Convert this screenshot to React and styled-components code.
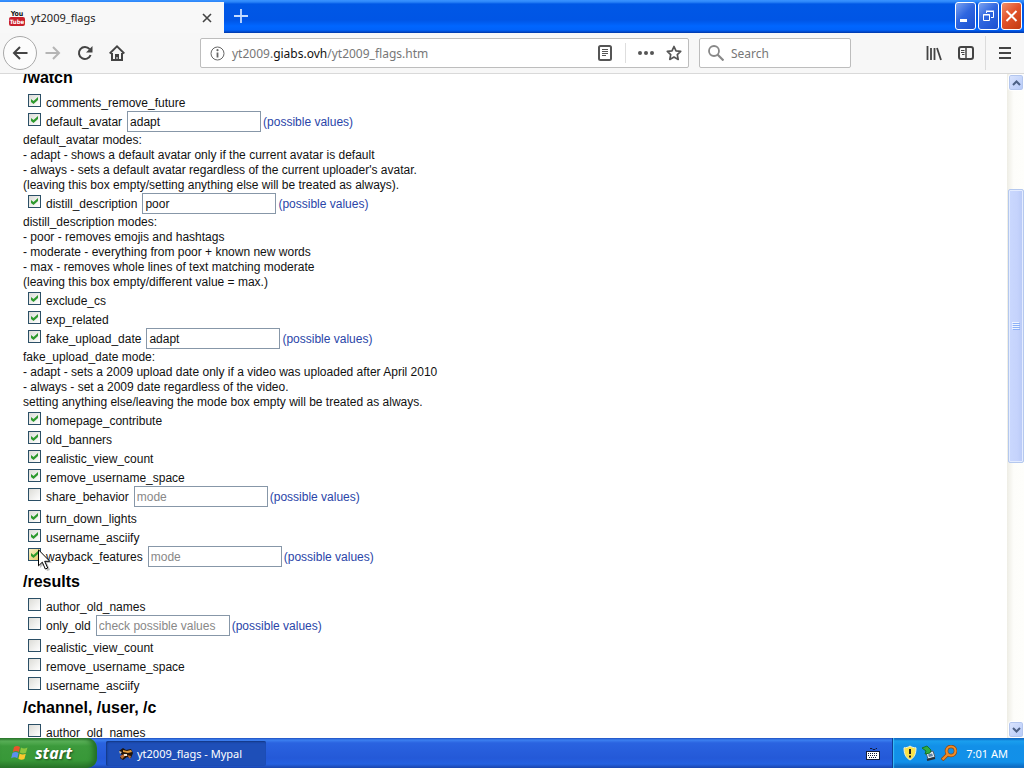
import React from "react";
import styled, { createGlobalStyle } from "styled-components";

const watchFlags = [
  { name: "comments_remove_future", on: true },
  {
    name: "default_avatar",
    on: true,
    value: "adapt",
    notes: [
      "default_avatar modes:",
      "- adapt - shows a default avatar only if the current avatar is default",
      "- always - sets a default avatar regardless of the current uploader's avatar.",
      "(leaving this box empty/setting anything else will be treated as always)."
    ]
  },
  {
    name: "distill_description",
    on: true,
    value: "poor",
    notes: [
      "distill_description modes:",
      "- poor - removes emojis and hashtags",
      "- moderate - everything from poor + known new words",
      "- max - removes whole lines of text matching moderate",
      "(leaving this box empty/different value = max.)"
    ]
  },
  { name: "exclude_cs", on: true },
  { name: "exp_related", on: true },
  {
    name: "fake_upload_date",
    on: true,
    value: "adapt",
    notes: [
      "fake_upload_date mode:",
      "- adapt - sets a 2009 upload date only if a video was uploaded after April 2010",
      "- always - set a 2009 date regardless of the video.",
      "setting anything else/leaving the mode box empty will be treated as always."
    ]
  },
  { name: "homepage_contribute", on: true },
  { name: "old_banners", on: true },
  { name: "realistic_view_count", on: true },
  { name: "remove_username_space", on: true },
  { name: "share_behavior", placeholder: "mode" },
  { name: "turn_down_lights", on: true },
  { name: "username_asciify", on: true },
  { name: "wayback_features", on: true, placeholder: "mode", hovered: true }
];

const resultsFlags = [
  { name: "author_old_names" },
  { name: "only_old", placeholder: "check possible values" },
  { name: "realistic_view_count" },
  { name: "remove_username_space" },
  { name: "username_asciify" }
];

const channelFlags = [{ name: "author_old_names" }];

const Flag = ({ page, flag }) => {
  const id = page + "-" + flag.name;
  const hasBox = flag.value !== undefined || flag.placeholder !== undefined;
  return (
    <>
      <FlagRow $tall={hasBox}>
        <CheckBox
          type="checkbox"
          id={id}
          defaultChecked={flag.on}
          $hovered={flag.hovered}
        />
        <FlagName htmlFor={id}>{flag.name}</FlagName>
        {hasBox && (
          <>
            <ModeBox
              type="text"
              aria-label={flag.name + " mode"}
              defaultValue={flag.value}
              placeholder={flag.placeholder}
            />
            <Values href="#">(possible values)</Values>
          </>
        )}
        {flag.hovered && <MousePointer />}
      </FlagRow>
      {flag.notes && flag.notes.map((n) => <Note key={n}>{n}</Note>)}
    </>
  );
};

const Section = ({ title, flags }) => (
  <section>
    <Heading>{title}</Heading>
    {flags.map((f) => (
      <Flag key={f.name} page={title} flag={f} />
    ))}
  </section>
);

const MousePointer = () => (
  <Pointer width="14" height="23" viewBox="0 0 14 23" aria-hidden="true">
    <path
      d="M2 3v16l4-4 3 7 3-1-3-7h5z"
      fill="#000"
      opacity="0.25"
    />
    <path
      d="M.5.8v16l3.8-3.6 3 6.8 2.4-1-3-6.7h5.1z"
      fill="#fff"
      stroke="#000"
    />
  </Pointer>
);

const YouTubeIcon = () => (
  <svg width="16" height="16" viewBox="0 0 16 16" aria-hidden="true">
    <rect x="0" y="7" width="16" height="9" rx="2" fill="#c9202b" />
    <text x="8" y="6" fontSize="7" fontWeight="bold" textAnchor="middle" fill="#111">
      You
    </text>
    <text x="8" y="14" fontSize="6" fontWeight="bold" textAnchor="middle" fill="#fff">
      Tube
    </text>
  </svg>
);

const App = () => {
  return (
    <Screen>
      <GlobalStyle />
      <TitleBar>
        <Tab>
          <YouTubeIcon />
          <TabTitle>yt2009_flags</TabTitle>
          <PlainButton aria-label="Close tab">
            <svg width="10" height="10" viewBox="0 0 10 10">
              <path d="M1 1l8 8M9 1l-8 8" stroke="#444" strokeWidth="1.6" />
            </svg>
          </PlainButton>
        </Tab>
        <NewTab aria-label="New tab">
          <svg width="14" height="14" viewBox="0 0 14 14">
            <path d="M7 0v14M0 7h14" stroke="#c5dcff" strokeWidth="1.8" />
          </svg>
        </NewTab>
        <WindowButtons>
          <WindowButton aria-label="Minimize">
            <svg width="19" height="26" viewBox="0 0 19 26">
              <path d="M4 16h7v3H4z" fill="#fff" />
            </svg>
          </WindowButton>
          <WindowButton aria-label="Restore">
            <svg width="19" height="26" viewBox="0 0 19 26" fill="none">
              <path d="M7.5 10V8.500h7v6H12M7 8h8" stroke="#fff" />
              <path d="M4.500 11.500h6v6h-6zM4 12h7" stroke="#fff" />
            </svg>
          </WindowButton>
          <WindowButton aria-label="Close" $close>
            <svg width="19" height="26" viewBox="0 0 19 26">
              <path d="M4.500 8l10 10M14.500 8l-10 10" stroke="#fff" strokeWidth="2" />
            </svg>
          </WindowButton>
        </WindowButtons>
      </TitleBar>

      <Toolbar>
        <BackButton aria-label="Back">
          <svg width="16" height="16" viewBox="0 0 16 16" fill="none">
            <path d="M15.500 8H2M8 2L2 8l6 6" stroke="#444" strokeWidth="2" />
          </svg>
        </BackButton>
        <ToolButton aria-label="Forward">
          <svg width="16" height="16" viewBox="0 0 16 16" fill="none">
            <path d="M.5 8H14M8 2l6 6-6 6" stroke="#b5b5b5" strokeWidth="2" />
          </svg>
        </ToolButton>
        <ToolButton aria-label="Reload">
          <svg width="16" height="16" viewBox="0 0 16 16" fill="none">
            <path
              d="M12.600 4.200A6 6 0 1 0 13.600 10"
              stroke="#444"
              strokeWidth="2"
            />
            <path d="M15.500 1v6.500H9z" fill="#444" />
          </svg>
        </ToolButton>
        <ToolButton aria-label="Home">
          <svg width="16" height="16" viewBox="0 0 16 16" fill="none">
            <path d="M.7 8.500L8 1.300l7.300 7.200" stroke="#444" strokeWidth="1.800" />
            <path d="M3 8v7h10V8" stroke="#444" strokeWidth="2" />
            <path d="M6 9h4v6H8.500v-3h-1v3H6z" fill="#444" />
          </svg>
        </ToolButton>
        <UrlBar>
          <svg width="15" height="15" viewBox="0 0 15 15" fill="none">
            <circle cx="7.500" cy="7.500" r="6.500" stroke="#666" />
            <path d="M7.500 6.500v5" stroke="#666" strokeWidth="1.800" />
            <circle cx="7.500" cy="4.200" r="1.100" fill="#666" />
          </svg>
          <Address>
            yt2009.<b>giabs.ovh</b>/yt2009_flags.htm
          </Address>
          <PlainButton aria-label="Reader view">
            <svg width="16" height="16" viewBox="0 0 16 16" fill="none">
              <rect x="2" y="1" width="12" height="14" rx="1.500" stroke="#555" strokeWidth="2" />
              <path d="M5 4.500h6M5 6.500h6M5 8.500h6M5 10.500h4" stroke="#555" />
            </svg>
          </PlainButton>
          <UrlDivider />
          <PlainButton aria-label="Page actions">
            <svg width="16" height="16" viewBox="0 0 16 16" fill="#555">
              <circle cx="2" cy="8" r="2" />
              <circle cx="8" cy="8" r="2" />
              <circle cx="14" cy="8" r="2" />
            </svg>
          </PlainButton>
          <Star aria-label="Bookmark this page">
            <svg width="16" height="16" viewBox="0 0 16 16" fill="none">
              <path
                d="M8 1.500l2 4.300 4.700.6-3.400 3.200.9 4.800L8 12l-4.200 2.400.9-4.800L1.300 6.400 6 5.800z"
                stroke="#555"
                strokeWidth="1.700"
                strokeLinejoin="round"
              />
            </svg>
          </Star>
        </UrlBar>
        <SearchBar>
          <svg width="16" height="16" viewBox="0 0 16 16" fill="none">
            <circle cx="6" cy="6" r="5" stroke="#888" strokeWidth="1.800" />
            <path d="M9.500 9.500l6 6" stroke="#888" strokeWidth="2.200" />
          </svg>
          <SearchInput type="text" aria-label="Search" placeholder="Search" />
        </SearchBar>
        <ToolButton aria-label="Library">
          <svg width="16" height="16" viewBox="0 0 16 16">
            <path
              d="M1.500 1v14M5 3v12M8.500 3v12M11 3l4 12"
              stroke="#444"
              strokeWidth="1.800"
            />
          </svg>
        </ToolButton>
        <ToolButton aria-label="Sidebars">
          <svg width="16" height="16" viewBox="0 0 16 16" fill="none">
            <rect x="1" y="2" width="14" height="12" rx="2" stroke="#444" strokeWidth="2" />
            <path d="M8 2v12" stroke="#444" strokeWidth="1.500" />
            <path d="M3 5.500h3.500M3 7.500h3.500M4 9.500h2.500" stroke="#444" />
          </svg>
        </ToolButton>
        <ToolDivider />
        <ToolButton aria-label="Open menu">
          <svg width="12" height="12" viewBox="0 0 12 12">
            <path d="M0 1h12M0 6h12M0 11h12" stroke="#444" strokeWidth="2" />
          </svg>
        </ToolButton>
      </Toolbar>

      <Viewport>
        <Page>
          <Section title="/watch" flags={watchFlags} />
          <Section title="/results" flags={resultsFlags} />
          <Section title="/channel, /user, /c" flags={channelFlags} />
        </Page>
        <ScrollBar>
          <ScrollButton aria-label="Scroll up" tabIndex={-1}>
            <svg width="9" height="6" viewBox="0 0 9 6" fill="none">
              <path d="M1 5l3.500-3.500L8 5" stroke="#4d6185" strokeWidth="2" />
            </svg>
          </ScrollButton>
          <Gap $grow={98} />
          <Thumb>
            <svg width="8" height="8" viewBox="0 0 8 8">
              <path d="M0 .5h7M0 2.500h7M0 4.500h7M0 6.500h7" stroke="#eef4fe" />
              <path d="M1 1.500h7M1 3.500h7M1 5.500h7M1 7.500h7" stroke="#8cb0f8" />
            </svg>
          </Thumb>
          <Gap $grow={259} />
          <ScrollButton aria-label="Scroll down" tabIndex={-1}>
            <svg width="9" height="6" viewBox="0 0 9 6" fill="none">
              <path d="M1 1l3.500 3.500L8 1" stroke="#4d6185" strokeWidth="2" />
            </svg>
          </ScrollButton>
        </ScrollBar>
      </Viewport>

      <TaskBar>
        <StartButton>
          <svg width="18" height="18" viewBox="0 0 18 18">
            <path d="M3 3c2-1.500 4-1.500 6 0L7.800 8C6 6.800 4 6.800 1.800 8z" fill="#e8542c" />
            <path d="M10 3.500c2 1.200 4 1.200 6.500 0L15 8.800c-2 1-4 1-6.200-.3z" fill="#8cc63e" />
            <path d="M1.500 9c2-1.300 4-1.300 6 0l-1.200 5.200C4.500 13 2.500 13 .2 14.200z" fill="#5b8ff0" />
            <path d="M8.600 9.600c2 1.200 4 1.200 6.200.2l-1.400 5.200c-2 1-4 1-6-.3z" fill="#fbc82e" />
          </svg>
          start
        </StartButton>
        <TaskButton>
          <svg width="16" height="16" viewBox="0 0 16 16">
            <path d="M1 5l4-3 3 2 5-1 2 4-2 5-4-1-4 3-3-2 2-3z" fill="#20150c" />
            <path d="M5 4l4 1 4-1 1 2-4 1-5-1z" fill="#e09a3c" />
            <path d="M1 5l3 1-2 2z" fill="#cfc3b4" />
            <path d="M2 10l4-2 1 2-3 3zM9 9l4 1-1 3z" fill="#b96a35" />
            <path d="M6 8h3v2H6z" fill="#f2e7d6" />
          </svg>
          yt2009_flags - Mypal
        </TaskButton>
        <LanguageButton aria-label="Keyboard">
          <svg width="14" height="14" viewBox="0 0 14 14" fill="none">
            <path d="M4 2.500h2l1 1h2l1-1h1" stroke="#111c3c" />
            <rect x=".5" y="5.500" width="13" height="8" fill="#fff" stroke="#111c3c" />
            <path
              d="M2 7.500h10M2 9.500h10M3 11.500h8"
              stroke="#111c3c"
              strokeDasharray="1 1"
            />
          </svg>
        </LanguageButton>
        <Tray>
          <svg width="14" height="16" viewBox="0 0 14 16">
            <path
              d="M7 1c2 1.400 4 1.800 6 1.800 0 6-1.500 9.700-6 12.200C2.500 12.500 1 8.800 1 2.800 3 2.800 5 2.400 7 1z"
              fill="#fbe34a"
              stroke="#eef0da"
            />
            <path d="M7 4v5M7 10.500v2" stroke="#222" strokeWidth="2" />
          </svg>
          <svg width="16" height="16" viewBox="0 0 16 16">
            <path d="M5 8l7-2 2 6-7 2z" fill="#dfe7ee" stroke="#4d5f70" />
            <path d="M7 9.500l4-1 1 2.500-4 1z" fill="#5d82a5" />
            <path d="M1 3l5-2 4 4-1 3-5 1 1-3z" fill="#2fae42" stroke="#16752a" />
            <path d="M6 15l8-2" stroke="#26313b" strokeWidth="2" />
          </svg>
          <svg width="16" height="16" viewBox="0 0 16 16" fill="none">
            <circle cx="10" cy="6" r="4.500" stroke="#8c4a12" strokeWidth="3.500" />
            <path d="M7 9l-6 6" stroke="#8c4a12" strokeWidth="3.800" />
            <circle cx="10" cy="6" r="4.500" stroke="#f08b28" strokeWidth="2.200" />
            <path d="M7 9l-5.500 5.500" stroke="#f08b28" strokeWidth="2.400" />
          </svg>
          <Clock>7:01 AM</Clock>
        </Tray>
      </TaskBar>
    </Screen>
  );
};

export default App;

const GlobalStyle = createGlobalStyle`
  body {
    margin: 0;
    background: #fff;
  }
  *, *::before, *::after {
    box-sizing: border-box;
  }
  button, input {
    font-family: inherit;
    padding: 0;
    margin: 0;
    border: 0;
    background: none;
  }
  svg {
    display: block;
    flex: none;
  }
`;

const Screen = styled.div`
  display: flex;
  flex-direction: column;
  height: 100vh;
  overflow: hidden;
  font-family: "Noto Sans", sans-serif;
  font-size: 12px;
`;

const TitleBar = styled.header`
  flex: none;
  display: flex;
  height: 33px;
  padding-top: 2px;
  background: linear-gradient(
    #3a93ff 0,
    #2a84f8 2px,
    #0058e6 4px,
    #0055e5 20px,
    #0066ff 26px,
    #0062fa 30px,
    #0036a8 33px
  );
`;

const Tab = styled.div`
  display: flex;
  align-items: center;
  width: 224px;
  padding: 0 12px 0 9px;
  background: #f8f8f8;

  text {
    font-family: "DejaVu Sans Condensed", "Liberation Sans", sans-serif;
  }
`;

const TabTitle = styled.span`
  flex: 1;
  padding-left: 6px;
  font-size: 11px;
  color: #222;
`;

const PlainButton = styled.button`
  display: flex;
  align-items: center;
`;

const NewTab = styled(PlainButton)`
  padding: 0 10px 4px;
`;

const WindowButtons = styled.div`
  display: flex;
  align-items: flex-start;
  gap: 2px;
  margin-left: auto;
  padding-right: 2px;
`;

const WindowButton = styled.button`
  width: 21px;
  height: 28px;
  border: 1px solid #fff;
  border-radius: 3px;
  background: ${(p) =>
    p.$close
      ? "linear-gradient(135deg, #f0906c, #e2532b 45%, #c23a10)"
      : "linear-gradient(135deg, #7ba2f0, #2f66e0 45%, #1a4fd0)"};
`;

const Toolbar = styled.nav`
  flex: none;
  display: flex;
  align-items: center;
  height: 41px;
  padding: 0 3px;
  background: #f7f7f7;
  border-bottom: 1px solid #d9d9d9;
`;

const ToolButton = styled.button`
  flex: none;
  display: flex;
  align-items: center;
  justify-content: center;
  width: 32px;
  height: 32px;
`;

const BackButton = styled(ToolButton)`
  width: 34px;
  height: 34px;
  border: 1px solid #a9a9a9;
  border-radius: 50%;
  background: #fcfcfc;
`;

const UrlBar = styled.div`
  flex: 1;
  display: flex;
  align-items: center;
  height: 30px;
  margin-left: 67px;
  padding: 0 6px 0 9px;
  background: #fff;
  border: 1px solid #bdbdbd;
  border-radius: 2px;
`;

const Address = styled.span`
  flex: 1;
  padding-left: 7px;
  color: #777;
  white-space: nowrap;

  b {
    font-weight: normal;
    color: #111;
  }
`;

const UrlDivider = styled.div`
  width: 1px;
  height: 20px;
  margin: 0 12px;
  background: #dedede;
`;

const Star = styled(PlainButton)`
  margin-left: 12px;
`;

const SearchBar = styled.div`
  display: flex;
  align-items: center;
  width: 152px;
  height: 30px;
  margin: 0 67px 0 10px;
  padding: 0 8px;
  background: #fff;
  border: 1px solid #bdbdbd;
  border-radius: 2px;
`;

const SearchInput = styled.input`
  width: 100%;
  padding-left: 7px;
  font-size: 12px;
  outline: 0;

  &::placeholder {
    color: #777;
  }
`;

const ToolDivider = styled.div`
  width: 1px;
  height: 34px;
  margin: 0 3px;
  background: #dcdcdc;
`;

const Viewport = styled.div`
  flex: 1;
  display: flex;
  min-height: 0;
`;

/* the list is scrolled a little past the first heading's top edge */
const Page = styled.main`
  flex: 1;
  overflow: hidden;
  padding-left: 23px;
  font-family: "Liberation Sans", Arial, sans-serif;
  font-size: 12px;
  line-height: 15px;
  color: #111;

  > :first-child {
    margin-top: -10px;
  }
`;

const Heading = styled.h2`
  margin: 0;
  font-size: 16px;
  line-height: 28px;
  color: #000;
`;

const FlagRow = styled.div`
  position: relative;
  display: flex;
  align-items: flex-start;
  height: ${(p) => (p.$tall ? "22px" : "19px")};
  padding-left: 5px;
`;

const CheckBox = styled.input`
  appearance: none;
  flex: none;
  width: 13px;
  height: 13px;
  margin: 2px 5px 0 0;
  border: 1px solid #2b4f66;
  background: ${(p) =>
    p.$hovered
      ? "linear-gradient(135deg, #f6efc4, #e6c868)"
      : "linear-gradient(135deg, #dcdcd7, #fff)"};

  &:checked::before {
    content: "";
    display: block;
    width: 7px;
    height: 7px;
    margin: 2px;
    background: #2e9a2e;
    clip-path: polygon(0 29%, 0 71%, 36% 100%, 100% 43%, 100% 0, 36% 57%);
  }
`;

const FlagName = styled.label`
  line-height: 23px;
  white-space: nowrap;
`;

const ModeBox = styled.input`
  width: 134px;
  height: 21px;
  margin: 0 2px 0 5px;
  padding: 0 2px;
  border: 1px solid #8797a8;
  background: #fff;
  font-size: 12px;
  color: #111;

  &::placeholder {
    color: #888;
  }
`;

const Values = styled.a`
  line-height: 23px;
  color: #2a45a8;
  text-decoration: none;
  white-space: nowrap;
`;

const Note = styled.div`
  white-space: nowrap;
`;

/* lies over the row that it points at */
const Pointer = styled.svg`
  position: absolute;
  left: 15px;
  top: 3px;
`;

const ScrollBar = styled.div`
  flex: none;
  display: flex;
  flex-direction: column;
  width: 17px;
  background: linear-gradient(90deg, #eeede5, #fdfdfa 40%, #fefefb);
`;

const ScrollButton = styled.button`
  flex: none;
  display: flex;
  align-items: center;
  justify-content: center;
  width: 16px;
  height: 17px;
  margin-left: 1px;
  border: 1px solid #fff;
  border-radius: 3px;
  background: linear-gradient(135deg, #dbe5fe, #b5c9f8);
  box-shadow: inset 0 0 0 1px #b3c6ee;
`;

const Gap = styled.div`
  flex: ${(p) => p.$grow} 0 0;
`;

const Thumb = styled.div`
  flex: 273 0 0;
  display: flex;
  align-items: center;
  justify-content: center;
  margin-left: 1px;
  border: 1px solid #b4c8ee;
  border-radius: 2px;
  background: linear-gradient(90deg, #cad8fe, #c5d3fc 60%, #b8c9f6);
  box-shadow: inset 0 0 0 1px #e4ecff;
`;

const TaskBar = styled.footer`
  flex: none;
  display: flex;
  height: 30px;
  background: linear-gradient(
    #1f4fc0 0,
    #3c80f0 2px,
    #2a63e0 5px,
    #2459d8 20px,
    #2561e0 26px,
    #1a45ae 30px
  );
  color: #fff;
`;

const StartButton = styled.button`
  display: flex;
  align-items: center;
  gap: 6px;
  width: 97px;
  padding-left: 11px;
  border-radius: 0 10px 10px 0;
  background: linear-gradient(
    #2f7a2f 0,
    #5cb35a 3px,
    #3c9a3c 8px,
    #389838 22px,
    #2a762a 30px
  );
  box-shadow: inset -4px 0 5px #236f26;
  font-size: 16px;
  font-style: italic;
  font-weight: bold;
  color: #fff;
  text-shadow: 1px 1px 2px #1d4d1d;
`;

const TaskButton = styled.button`
  display: flex;
  align-items: center;
  gap: 3px;
  width: 160px;
  height: 25px;
  margin: 3px auto 0 9px;
  padding-left: 12px;
  border-radius: 2px;
  background: #1e4fb8;
  box-shadow: inset 1px 1px 2px #123580;
  font-size: 11px;
  color: #fff;
  white-space: nowrap;
`;

const LanguageButton = styled(PlainButton)`
  margin-right: 12px;
`;

const Tray = styled.div`
  display: flex;
  align-items: center;
  gap: 4px;
  padding: 0 16px 0 10px;
  border-left: 1px solid #0f3f94;
  box-shadow: inset 1px 0 1px #3cc0f8;
  background: linear-gradient(
    #0c59b9 0,
    #1a9fee 3px,
    #1290e8 8px,
    #1190e9 24px,
    #0c62b8 30px
  );
`;

const Clock = styled.time`
  padding-left: 5px;
  font-size: 11px;
`;
